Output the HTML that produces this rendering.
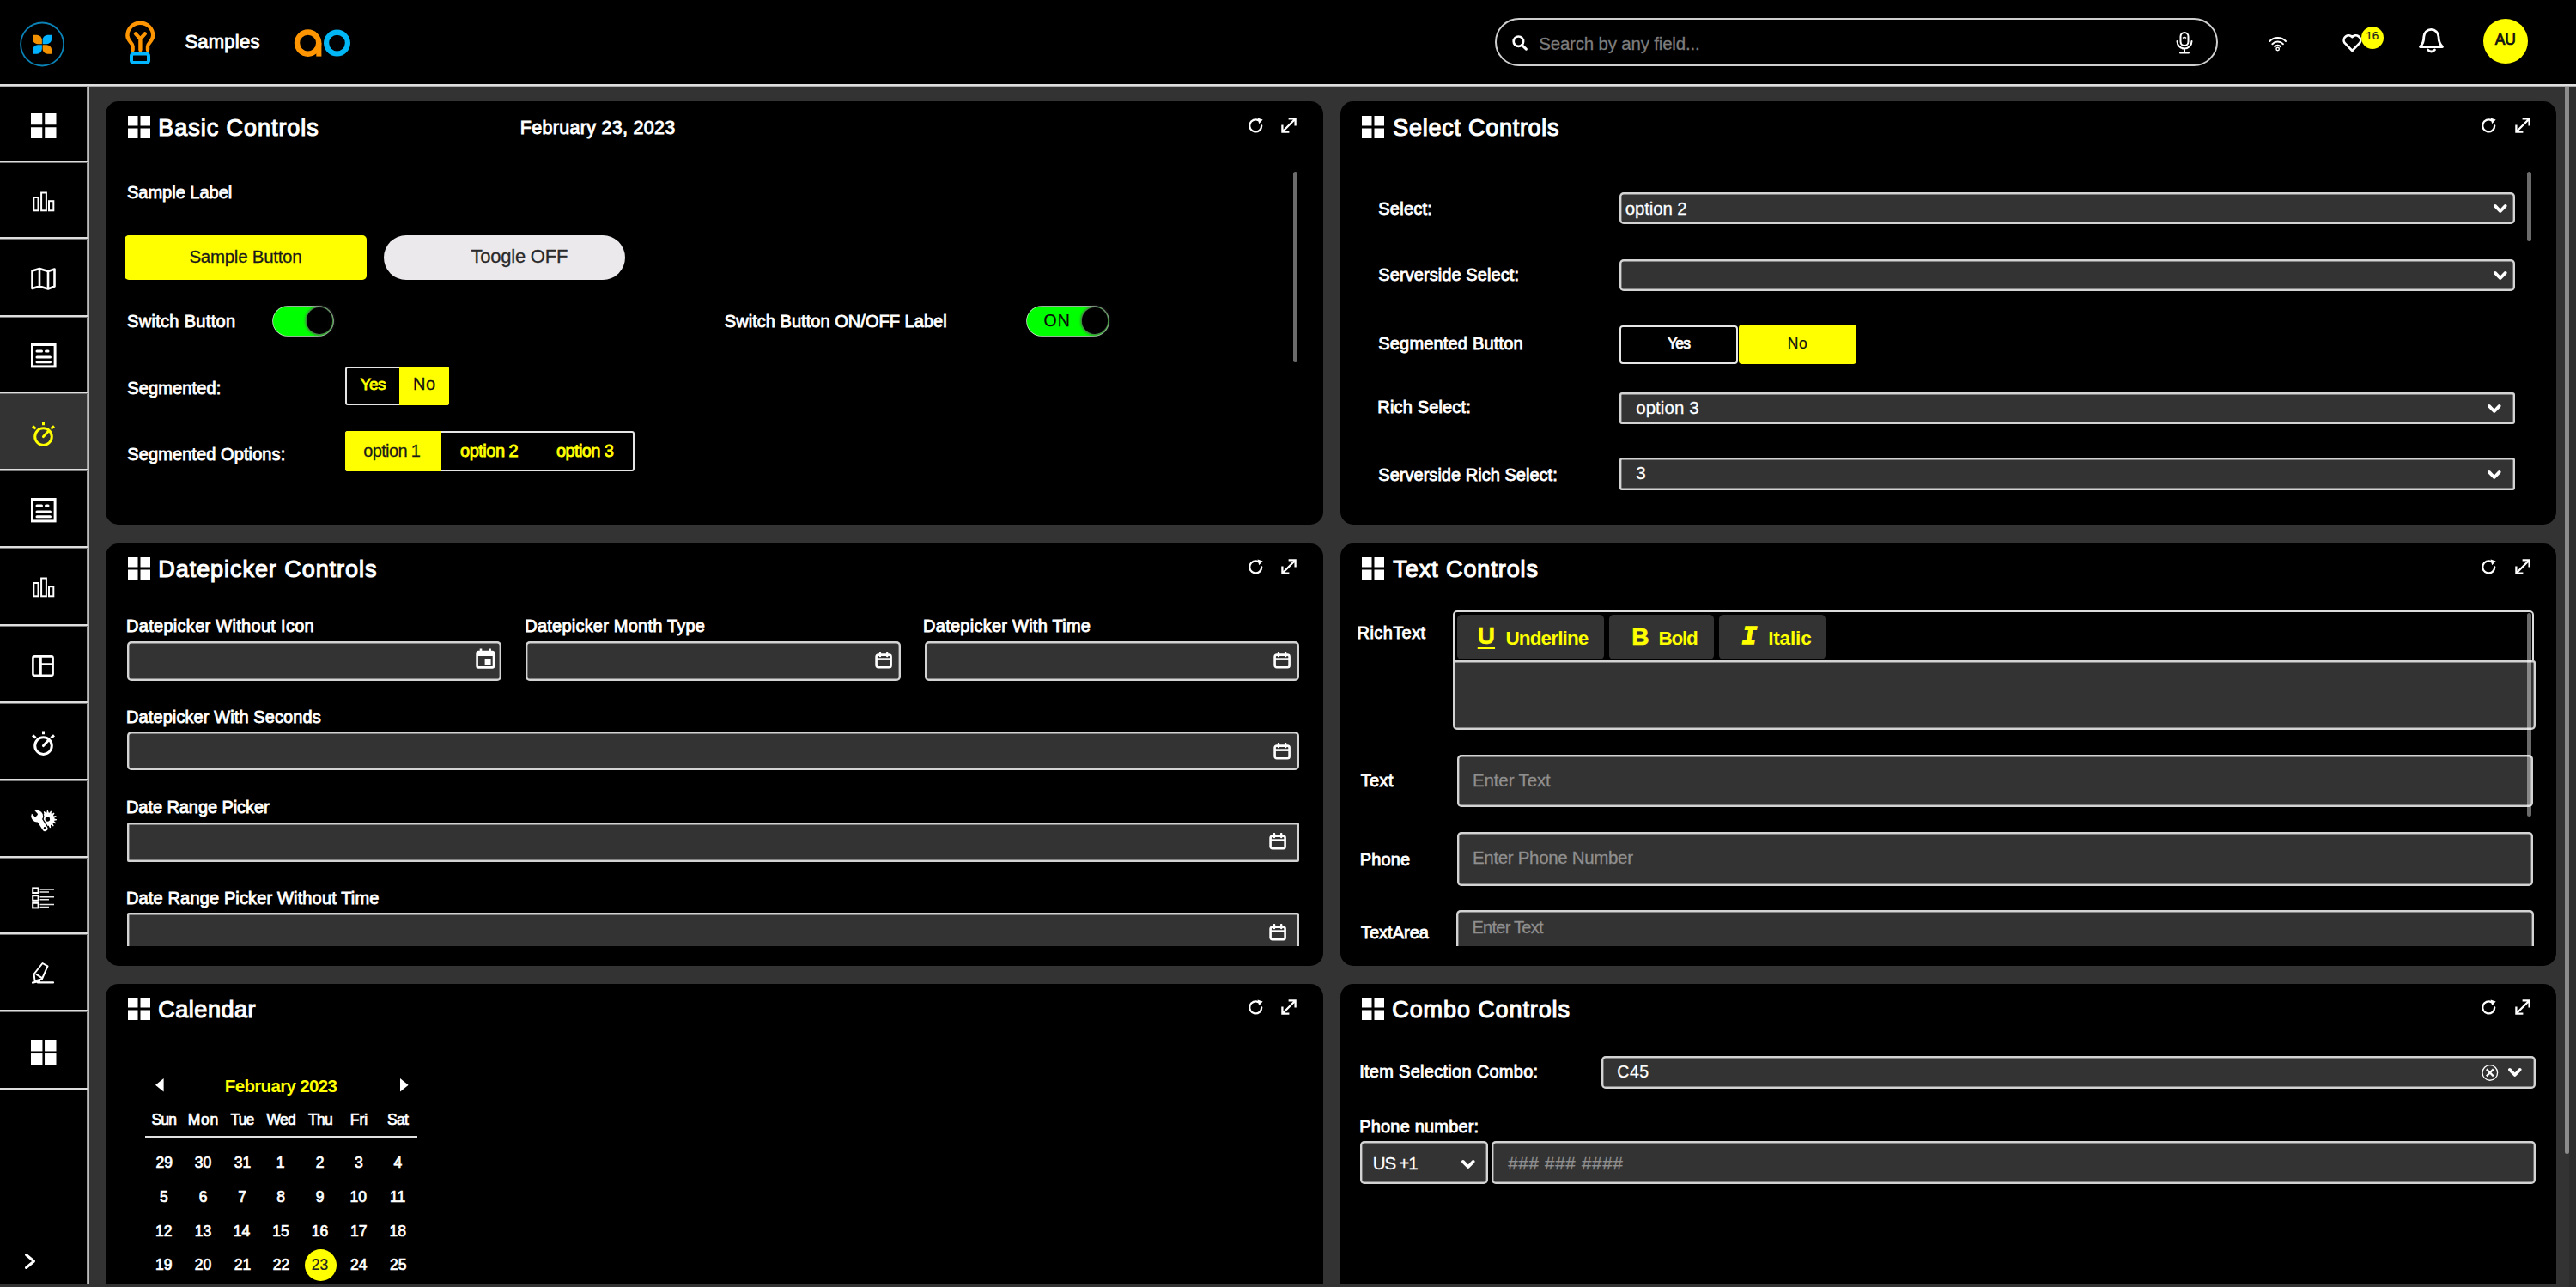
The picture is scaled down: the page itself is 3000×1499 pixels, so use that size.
<!DOCTYPE html>
<html lang="en"><head><meta charset="utf-8"><title>Samples</title><style>
html,body{margin:0;padding:0;background:#000;}
body{width:3000px;height:1499px;position:relative;overflow:hidden;font-family:"Liberation Sans", sans-serif;}
.a{position:absolute;display:block;}
.t{position:absolute;white-space:nowrap;line-height:1;display:block;}
</style></head>
<body>
<div class="a" style="left:0px;top:0px;width:3000px;height:1499px;background:#000;"></div>
<div class="a" style="left:103px;top:100px;width:2897px;height:1399px;background:#333333;"></div>
<div class="a" style="left:0px;top:0px;width:3000px;height:98px;background:#000;"></div>
<div class="a" style="left:0px;top:98px;width:3000px;height:3px;background:linear-gradient(#dedede 0 2px,#acacac 2px 3px);"></div>
<div class="a" style="left:0px;top:101px;width:101px;height:1398px;background:#000;"></div>
<div class="a" style="left:101px;top:100px;width:3px;height:1399px;background:linear-gradient(90deg,#9c9c9c 0 1px,#dedede 1px 2px,#bdbdbd 2px 3px);"></div>
<div class="a" style="left:0px;top:459px;width:101px;height:88px;background:#333333;"></div>
<div class="a" style="left:0px;top:187px;width:102px;height:3px;background:linear-gradient(#dedede 0 2px,#757575 2px 3px);"></div>
<div class="a" style="left:0px;top:276px;width:102px;height:3px;background:linear-gradient(#dedede 0 2px,#757575 2px 3px);"></div>
<div class="a" style="left:0px;top:367px;width:102px;height:3px;background:linear-gradient(#dedede 0 2px,#757575 2px 3px);"></div>
<div class="a" style="left:0px;top:456px;width:102px;height:3px;background:linear-gradient(#dedede 0 2px,#757575 2px 3px);"></div>
<div class="a" style="left:0px;top:546px;width:102px;height:3px;background:linear-gradient(#dedede 0 2px,#757575 2px 3px);"></div>
<div class="a" style="left:0px;top:636px;width:102px;height:3px;background:linear-gradient(#dedede 0 2px,#757575 2px 3px);"></div>
<div class="a" style="left:0px;top:727px;width:102px;height:3px;background:linear-gradient(#dedede 0 2px,#757575 2px 3px);"></div>
<div class="a" style="left:0px;top:817px;width:102px;height:3px;background:linear-gradient(#dedede 0 2px,#757575 2px 3px);"></div>
<div class="a" style="left:0px;top:907px;width:102px;height:3px;background:linear-gradient(#dedede 0 2px,#757575 2px 3px);"></div>
<div class="a" style="left:0px;top:997px;width:102px;height:3px;background:linear-gradient(#dedede 0 2px,#757575 2px 3px);"></div>
<div class="a" style="left:0px;top:1086px;width:102px;height:3px;background:linear-gradient(#dedede 0 2px,#757575 2px 3px);"></div>
<div class="a" style="left:0px;top:1176px;width:102px;height:3px;background:linear-gradient(#dedede 0 2px,#757575 2px 3px);"></div>
<div class="a" style="left:0px;top:1267px;width:102px;height:3px;background:linear-gradient(#dedede 0 2px,#757575 2px 3px);"></div>
<svg class="a" style="left:20px;top:22px;" width="60" height="60" viewBox="0 0 60 60"><circle cx="29.1" cy="29.5" r="25" fill="none" stroke="#0b82b6" stroke-width="1.8"/><path d="M18 18.7 H22.90 A6.00 6.00 0 0 1 28.9 24.70 V29.2 H24.00 A6.00 6.00 0 0 1 18 23.20 Z" fill="#f39200"/><path d="M40.1 18.7 H35.38 A5.78 5.78 0 0 0 29.6 24.48 V29.2 H34.33 A5.78 5.78 0 0 0 40.1 23.42 Z" fill="#00b2ff"/><path d="M18 40.8 H22.90 A6.00 6.00 0 0 0 28.9 34.80 V30.3 H24.00 A6.00 6.00 0 0 0 18 36.30 Z" fill="#00b2ff"/><path d="M40.1 40.8 H35.38 A5.78 5.78 0 0 1 29.6 35.02 V30.3 H34.33 A5.78 5.78 0 0 1 40.1 36.08 Z" fill="#f39200"/></svg>
<svg class="a" style="left:140px;top:20px;" width="50" height="60" viewBox="0 0 50 60">
<path d="M14.6 38 V34 C14.6 30 8.4 27.5 8.4 21.6 A14.9 14.9 0 0 1 38.2 21.6 C38.2 27.5 32 30 32 34 V38" fill="none" stroke="#ff9500" stroke-width="4.4" stroke-linecap="round" stroke-linejoin="round"/>
<path d="M23.4 38 V25 M18 19.4 L23.4 25.4 L28.8 19.4" fill="none" stroke="#ff9500" stroke-width="4.4" stroke-linecap="round" stroke-linejoin="round"/>
<rect x="13" y="42.5" width="20" height="10.5" rx="2.5" fill="none" stroke="#00b7ff" stroke-width="4"/>
</svg>
<span class="t" id="t0" style="left:215.40px;top:38px;font-size:22px;color:#fff;letter-spacing:0.233px;-webkit-text-stroke:0.92px #fff;">Samples</span>
<svg class="a" style="left:340px;top:30px;" width="72" height="40" viewBox="0 0 72 40">
<circle cx="18.6" cy="20.1" r="12.6" fill="none" stroke="#ff9500" stroke-width="6.4"/>
<path d="M28.3 20 H34.4 V35.6 H28.3 Z" fill="#ff9500"/>
<circle cx="52.5" cy="20.1" r="12.4" fill="none" stroke="#00b7f5" stroke-width="6.2"/>
</svg>
<div class="a" style="left:1741px;top:21px;width:842px;height:56px;border:2px solid #cfcfcf;border-radius:28px;box-sizing:border-box;"></div>
<svg class="a" style="left:1760px;top:40px;" width="22" height="22" viewBox="0 0 22 22"><circle cx="8.4" cy="8.2" r="5.7" fill="none" stroke="#fff" stroke-width="2.7"/><path d="M12.6 12.6 L17.4 17.2" stroke="#fff" stroke-width="3" stroke-linecap="round"/></svg>
<span class="t" id="t1" style="left:1792.20px;top:41px;font-size:20.5px;color:#7d7d7d;letter-spacing:-0.190px;-webkit-text-stroke:0.27px #7d7d7d;">Search by any field...</span>
<svg class="a" style="left:2532px;top:36px;" width="24" height="28" viewBox="0 0 24 28">
<rect x="7.5" y="2" width="9" height="15" rx="4.5" fill="none" stroke="#fff" stroke-width="2"/>
<path d="M3.5 12 A8.5 8.5 0 0 0 20.5 12 M12 20.5 V25 M7 25.5 H17" fill="none" stroke="#fff" stroke-width="2" stroke-linecap="round"/>
<path d="M10 8.5 Q12 6.5 14 8.5" fill="none" stroke="#fff" stroke-width="1.4"/>
</svg>
<svg class="a" style="left:2641px;top:40px;" width="24" height="21" viewBox="0 0 24 21">
<path d="M2.3 8 A13 13 0 0 1 21 8" fill="none" stroke="#fff" stroke-width="2" stroke-linecap="round"/>
<path d="M5.4 11.2 A8.8 8.8 0 0 1 17.9 11.2" fill="none" stroke="#fff" stroke-width="2" stroke-linecap="round"/>
<path d="M8.3 14.2 A4.6 4.6 0 0 1 15 14.2" fill="none" stroke="#fff" stroke-width="2" stroke-linecap="round"/>
<circle cx="11.65" cy="17" r="1.7" fill="none" stroke="#fff" stroke-width="1.4"/>
</svg>
<svg class="a" style="left:2726px;top:37px;" width="28" height="26" viewBox="0 0 28 26"><path d="M13.4 22 L4.3 12.6 A5.6 5.6 0 0 1 13.4 6.2 A5.6 5.6 0 0 1 22.5 12.6 Z" fill="none" stroke="#fff" stroke-width="2.6" stroke-linejoin="round"/></svg>
<div class="a" style="left:2750px;top:30.5px;width:26px;height:26px;background:#ffff00;border-radius:13px;"></div>
<span class="t" id="t2" style="left:2755.30px;top:35px;font-size:13.5px;color:#222;-webkit-text-stroke:0.18px #222;">16</span>
<svg class="a" style="left:2815px;top:31px;" width="34" height="32" viewBox="0 0 34 32">
<path d="M3.5 23.5 H29.5 C26 20 25 16 25 12 A8.6 8.6 0 0 0 7.8 12 C7.8 16 7 20 3.5 23.5 Z" fill="none" stroke="#fff" stroke-width="2.8" stroke-linejoin="round"/>
<path d="M12.5 27 Q16.5 31 20.5 27" fill="none" stroke="#fff" stroke-width="2.6" stroke-linecap="round"/>
</svg>
<div class="a" style="left:2891.6px;top:22.2px;width:52px;height:52px;background:#ffff00;border-radius:26px;"></div>
<span class="t" id="t3" style="left:2905.70px;top:38px;font-size:17.5px;color:#111;-webkit-text-stroke:0.74px #111;">AU</span>
<svg class="a" style="left:36px;top:131.5px;" width="29.5" height="29.5" viewBox="0 0 29.5 29.5"><rect x="0" y="0" width="13.25" height="13.25" fill="#fff"/><rect x="16.25" y="0" width="13.25" height="13.25" fill="#fff"/><rect x="0" y="16.25" width="13.25" height="13.25" fill="#fff"/><rect x="16.25" y="16.25" width="13.25" height="13.25" fill="#fff"/></svg>
<svg class="a" style="left:36.5px;top:221.5px;" width="28" height="26" viewBox="0 0 28 26">
<rect x="2.3" y="8" width="5.2" height="15.3" fill="none" stroke="#fff" stroke-width="2"/>
<rect x="11.1" y="2.5" width="5.8" height="20.8" fill="none" stroke="#fff" stroke-width="2"/>
<rect x="20" y="12.2" width="5.3" height="11.1" fill="none" stroke="#fff" stroke-width="2"/></svg>
<svg class="a" style="left:34.5px;top:311px;" width="32" height="28" viewBox="0 0 32 28"><path d="M2.5 4.5 L11 2 L21 5 L28.5 2.5 V22.5 L21 25.5 L11 22.5 L2.5 25 Z M11 2.5 V22.5 M21 5 V25" fill="none" stroke="#fff" stroke-width="2.6" stroke-linejoin="round"/></svg>
<svg class="a" style="left:35.6px;top:399.6px;" width="30" height="29" viewBox="0 0 30 29"><rect x="1.5" y="1.5" width="26.6" height="25.4" fill="none" stroke="#fff" stroke-width="3"/>
<path d="M7 9 H12.5 M17.5 9 H20" stroke="#fff" stroke-width="3" stroke-linecap="round"/>
<path d="M7 16 H22.5 M7 21.8 H22.5" stroke="#fff" stroke-width="3" stroke-linecap="round"/></svg>
<svg class="a" style="left:36px;top:489.5px;" width="30" height="31" viewBox="0 0 30 31"><circle cx="14.5" cy="18.6" r="9.8" fill="none" stroke="#ffff00" stroke-width="3"/>
<path d="M14.5 1.4 V5.2 M2 6.4 L5.6 9.4 M27 6.4 L23.4 9.4" stroke="#ffff00" stroke-width="3" stroke-linecap="butt"/><path d="M14.5 18.6 L20.6 12" stroke="#ffff00" stroke-width="3" stroke-linecap="round"/></svg>
<svg class="a" style="left:35.6px;top:580px;" width="30" height="29" viewBox="0 0 30 29"><rect x="1.5" y="1.5" width="26.6" height="25.4" fill="none" stroke="#fff" stroke-width="3"/>
<path d="M7 9 H12.5 M17.5 9 H20" stroke="#fff" stroke-width="3" stroke-linecap="round"/>
<path d="M7 16 H22.5 M7 21.8 H22.5" stroke="#fff" stroke-width="3" stroke-linecap="round"/></svg>
<svg class="a" style="left:36.5px;top:671px;" width="28" height="26" viewBox="0 0 28 26">
<rect x="2.3" y="8" width="5.2" height="15.3" fill="none" stroke="#fff" stroke-width="2"/>
<rect x="11.1" y="2.5" width="5.8" height="20.8" fill="none" stroke="#fff" stroke-width="2"/>
<rect x="20" y="12.2" width="5.3" height="11.1" fill="none" stroke="#fff" stroke-width="2"/></svg>
<svg class="a" style="left:37.4px;top:762.8px;" width="27" height="26" viewBox="0 0 27 26"><rect x="1.4" y="1.4" width="23.2" height="22.4" rx="2" fill="none" stroke="#fff" stroke-width="2.6"/>
<path d="M10.4 1.4 V23.8 M10.4 10.6 H24.6" stroke="#fff" stroke-width="2.8"/></svg>
<svg class="a" style="left:36px;top:850px;" width="30" height="31" viewBox="0 0 30 31"><circle cx="14.5" cy="18.6" r="9.8" fill="none" stroke="#fff" stroke-width="3"/>
<path d="M14.5 1.4 V5.2 M2 6.4 L5.6 9.4 M27 6.4 L23.4 9.4" stroke="#fff" stroke-width="3" stroke-linecap="butt"/><path d="M14.5 18.6 L20.6 12" stroke="#fff" stroke-width="3" stroke-linecap="round"/></svg>
<svg class="a" style="left:35px;top:940.5px;" width="34" height="30" viewBox="0 0 34 30"><polygon points="31.1,13.2 31.0,14.3 28.3,14.8 28.1,15.5 30.2,17.3 29.7,18.3 27.0,17.7 26.5,18.3 27.7,20.8 26.9,21.5 24.7,19.8 24.0,20.1 24.1,22.9 23.0,23.2 21.7,20.8 20.9,20.8 19.8,23.3 18.8,23.2 18.6,20.4 17.8,20.1 15.8,22.0 14.9,21.5 15.8,18.8 15.3,18.3 12.6,19.2 12.1,18.3 14.0,16.3 13.7,15.5 10.9,15.3 10.8,14.3 13.3,13.2 13.3,12.4 10.9,11.1 11.2,10.0 14.0,10.1 14.3,9.4 12.6,7.2 13.3,6.4 15.8,7.6 16.4,7.1 15.8,4.4 16.8,3.9 18.6,6.0 19.3,5.8 19.8,3.1 20.9,3.0 21.7,5.6 22.5,5.8 24.1,3.5 25.0,3.9 24.7,6.6 25.4,7.1 27.7,5.6 28.5,6.4 27.0,8.7 27.5,9.4 30.2,9.1 30.6,10.0 28.3,11.6 28.5,12.4" fill="#fff"/><circle cx="20.4" cy="13" r="2.7" fill="#000"/><g stroke-linecap="round"><path d="M8.2 9.6 L17.4 24" stroke="#000" stroke-width="8.8"/><circle cx="8.2" cy="9.6" r="8.2" fill="#000"/><path d="M8.2 9.6 L17.4 24" stroke="#fff" stroke-width="6.2"/><circle cx="8.2" cy="9.6" r="6.9" fill="#fff"/></g><rect x="5.799999999999999" y="-2.4000000000000004" width="4.8" height="11.4" rx="1.6" fill="#000" transform="rotate(-44 8.2 9.6)"/><circle cx="17.099999999999998" cy="23.4" r="1.3" fill="#000"/></svg>
<svg class="a" style="left:37px;top:1032.5px;" width="28" height="27" viewBox="0 0 28 27"><rect x="1.2" y="1.4" width="6.4" height="5.6" fill="none" stroke="#fff" stroke-width="2"/><path d="M9.5 3.0 H26 M9.5 6.0 H20" stroke="#e8e8e8" stroke-width="1.5"/><rect x="1.2" y="10.2" width="6.4" height="5.6" fill="none" stroke="#fff" stroke-width="2"/><path d="M9.5 11.8 H26 M9.5 14.8 H20" stroke="#e8e8e8" stroke-width="1.5"/><rect x="1.2" y="18.8" width="6.4" height="5.6" fill="none" stroke="#fff" stroke-width="2"/><path d="M9.5 20.4 H26 M9.5 23.4 H20" stroke="#e8e8e8" stroke-width="1.5"/></svg>
<svg class="a" style="left:37px;top:1120px;" width="28" height="29" viewBox="0 0 28 29"><path d="M12.5 2 L18.5 5.4 L11.8 20.5 L3.5 22.4 L2.6 14.5 Z M5 14.6 L11.5 18.8" fill="none" stroke="#fff" stroke-width="2" stroke-linejoin="round"/>
<path d="M1 24.6 L9 22.8 M7 24.4 H25" stroke="#fff" stroke-width="2.2" stroke-linecap="round"/></svg>
<svg class="a" style="left:36px;top:1211px;" width="29.5" height="29.5" viewBox="0 0 29.5 29.5"><rect x="0" y="0" width="13.45" height="13.45" fill="#fff"/><rect x="16.05" y="0" width="13.45" height="13.45" fill="#fff"/><rect x="0" y="16.05" width="13.45" height="13.45" fill="#fff"/><rect x="16.05" y="16.05" width="13.45" height="13.45" fill="#fff"/></svg>
<svg class="a" style="left:27px;top:1458px;" width="18" height="22" viewBox="0 0 18 22"><path d="M3.5 3.5 L12.5 11 L3.5 18.5" fill="none" stroke="#fff" stroke-width="3" stroke-linecap="round" stroke-linejoin="round"/></svg>
<div class="a" style="left:123px;top:118.3px;width:1417.6px;height:493.2px;background:#000;border-radius:15px;"></div>
<svg class="a" style="left:148.6px;top:134.7px;" width="26" height="26" viewBox="0 0 26 26"><rect x="0" y="0" width="11.5" height="11.5" fill="#fff"/><rect x="14.5" y="0" width="11.5" height="11.5" fill="#fff"/><rect x="0" y="14.5" width="11.5" height="11.5" fill="#fff"/><rect x="14.5" y="14.5" width="11.5" height="11.5" fill="#fff"/></svg>
<span class="t" id="t4" style="left:184.30px;top:136px;font-size:27px;color:#fff;letter-spacing:0.954px;-webkit-text-stroke:1.13px #fff;">Basic Controls</span>
<svg class="a" style="left:1452.6px;top:136.5px;" width="20" height="19" viewBox="0 0 20 19"><path d="M16.2 9.4 A7 7 0 1 1 12.6 3.3" fill="none" stroke="#fff" stroke-width="2.3" stroke-linecap="round"/>
<path d="M11.6 0.4 L17.6 2.4 L13.2 7.2 Z" fill="#fff"/></svg>
<svg class="a" style="left:1491.3px;top:135.9px;" width="20" height="20" viewBox="0 0 20 20"><path d="M3 17 L17 3 M9.6 2.4 H17.6 V10.4 M2.4 9.6 V17.6 H10.4" fill="none" stroke="#fff" stroke-width="2.3" stroke-linejoin="miter"/></svg>
<div class="a" style="left:1560.6px;top:118.3px;width:1416.2000000000003px;height:493.2px;background:#000;border-radius:15px;"></div>
<svg class="a" style="left:1585.6px;top:134.7px;" width="26" height="26" viewBox="0 0 26 26"><rect x="0" y="0" width="11.5" height="11.5" fill="#fff"/><rect x="14.5" y="0" width="11.5" height="11.5" fill="#fff"/><rect x="0" y="14.5" width="11.5" height="11.5" fill="#fff"/><rect x="14.5" y="14.5" width="11.5" height="11.5" fill="#fff"/></svg>
<span class="t" id="t5" style="left:1622.30px;top:136px;font-size:27px;color:#fff;letter-spacing:0.729px;-webkit-text-stroke:1.13px #fff;">Select Controls</span>
<svg class="a" style="left:2888.8px;top:136.5px;" width="20" height="19" viewBox="0 0 20 19"><path d="M16.2 9.4 A7 7 0 1 1 12.6 3.3" fill="none" stroke="#fff" stroke-width="2.3" stroke-linecap="round"/>
<path d="M11.6 0.4 L17.6 2.4 L13.2 7.2 Z" fill="#fff"/></svg>
<svg class="a" style="left:2927.5px;top:135.9px;" width="20" height="20" viewBox="0 0 20 20"><path d="M3 17 L17 3 M9.6 2.4 H17.6 V10.4 M2.4 9.6 V17.6 H10.4" fill="none" stroke="#fff" stroke-width="2.3" stroke-linejoin="miter"/></svg>
<div class="a" style="left:123px;top:632.6px;width:1417.6px;height:492.6px;background:#000;border-radius:15px;"></div>
<svg class="a" style="left:148.6px;top:649.0px;" width="26" height="26" viewBox="0 0 26 26"><rect x="0" y="0" width="11.5" height="11.5" fill="#fff"/><rect x="14.5" y="0" width="11.5" height="11.5" fill="#fff"/><rect x="0" y="14.5" width="11.5" height="11.5" fill="#fff"/><rect x="14.5" y="14.5" width="11.5" height="11.5" fill="#fff"/></svg>
<span class="t" id="t6" style="left:184.30px;top:650px;font-size:27px;color:#fff;letter-spacing:0.944px;-webkit-text-stroke:1.13px #fff;">Datepicker Controls</span>
<svg class="a" style="left:1452.6px;top:650.8000000000001px;" width="20" height="19" viewBox="0 0 20 19"><path d="M16.2 9.4 A7 7 0 1 1 12.6 3.3" fill="none" stroke="#fff" stroke-width="2.3" stroke-linecap="round"/>
<path d="M11.6 0.4 L17.6 2.4 L13.2 7.2 Z" fill="#fff"/></svg>
<svg class="a" style="left:1491.3px;top:650.2px;" width="20" height="20" viewBox="0 0 20 20"><path d="M3 17 L17 3 M9.6 2.4 H17.6 V10.4 M2.4 9.6 V17.6 H10.4" fill="none" stroke="#fff" stroke-width="2.3" stroke-linejoin="miter"/></svg>
<div class="a" style="left:1560.6px;top:632.6px;width:1416.2000000000003px;height:492.6px;background:#000;border-radius:15px;"></div>
<svg class="a" style="left:1585.6px;top:649.0px;" width="26" height="26" viewBox="0 0 26 26"><rect x="0" y="0" width="11.5" height="11.5" fill="#fff"/><rect x="14.5" y="0" width="11.5" height="11.5" fill="#fff"/><rect x="0" y="14.5" width="11.5" height="11.5" fill="#fff"/><rect x="14.5" y="14.5" width="11.5" height="11.5" fill="#fff"/></svg>
<span class="t" id="t7" style="left:1622.30px;top:650px;font-size:27px;color:#fff;letter-spacing:0.933px;-webkit-text-stroke:1.13px #fff;">Text Controls</span>
<svg class="a" style="left:2888.8px;top:650.8000000000001px;" width="20" height="19" viewBox="0 0 20 19"><path d="M16.2 9.4 A7 7 0 1 1 12.6 3.3" fill="none" stroke="#fff" stroke-width="2.3" stroke-linecap="round"/>
<path d="M11.6 0.4 L17.6 2.4 L13.2 7.2 Z" fill="#fff"/></svg>
<svg class="a" style="left:2927.5px;top:650.2px;" width="20" height="20" viewBox="0 0 20 20"><path d="M3 17 L17 3 M9.6 2.4 H17.6 V10.4 M2.4 9.6 V17.6 H10.4" fill="none" stroke="#fff" stroke-width="2.3" stroke-linejoin="miter"/></svg>
<div class="a" style="left:123px;top:1145.5px;width:1417.6px;height:400px;background:#000;border-radius:15px;"></div>
<svg class="a" style="left:148.6px;top:1161.9px;" width="26" height="26" viewBox="0 0 26 26"><rect x="0" y="0" width="11.5" height="11.5" fill="#fff"/><rect x="14.5" y="0" width="11.5" height="11.5" fill="#fff"/><rect x="0" y="14.5" width="11.5" height="11.5" fill="#fff"/><rect x="14.5" y="14.5" width="11.5" height="11.5" fill="#fff"/></svg>
<span class="t" id="t8" style="left:184.30px;top:1163px;font-size:27px;color:#fff;letter-spacing:0.514px;-webkit-text-stroke:1.13px #fff;">Calendar</span>
<svg class="a" style="left:1452.6px;top:1163.7px;" width="20" height="19" viewBox="0 0 20 19"><path d="M16.2 9.4 A7 7 0 1 1 12.6 3.3" fill="none" stroke="#fff" stroke-width="2.3" stroke-linecap="round"/>
<path d="M11.6 0.4 L17.6 2.4 L13.2 7.2 Z" fill="#fff"/></svg>
<svg class="a" style="left:1491.3px;top:1163.1px;" width="20" height="20" viewBox="0 0 20 20"><path d="M3 17 L17 3 M9.6 2.4 H17.6 V10.4 M2.4 9.6 V17.6 H10.4" fill="none" stroke="#fff" stroke-width="2.3" stroke-linejoin="miter"/></svg>
<div class="a" style="left:1560.6px;top:1145.5px;width:1416.2000000000003px;height:400px;background:#000;border-radius:15px;"></div>
<svg class="a" style="left:1585.6px;top:1161.9px;" width="26" height="26" viewBox="0 0 26 26"><rect x="0" y="0" width="11.5" height="11.5" fill="#fff"/><rect x="14.5" y="0" width="11.5" height="11.5" fill="#fff"/><rect x="0" y="14.5" width="11.5" height="11.5" fill="#fff"/><rect x="14.5" y="14.5" width="11.5" height="11.5" fill="#fff"/></svg>
<span class="t" id="t9" style="left:1621.30px;top:1163px;font-size:27px;color:#fff;letter-spacing:0.892px;-webkit-text-stroke:1.13px #fff;">Combo Controls</span>
<svg class="a" style="left:2888.8px;top:1163.7px;" width="20" height="19" viewBox="0 0 20 19"><path d="M16.2 9.4 A7 7 0 1 1 12.6 3.3" fill="none" stroke="#fff" stroke-width="2.3" stroke-linecap="round"/>
<path d="M11.6 0.4 L17.6 2.4 L13.2 7.2 Z" fill="#fff"/></svg>
<svg class="a" style="left:2927.5px;top:1163.1px;" width="20" height="20" viewBox="0 0 20 20"><path d="M3 17 L17 3 M9.6 2.4 H17.6 V10.4 M2.4 9.6 V17.6 H10.4" fill="none" stroke="#fff" stroke-width="2.3" stroke-linejoin="miter"/></svg>
<span class="t" id="t10" style="left:605.80px;top:139px;font-size:21.5px;color:#fff;letter-spacing:0.300px;-webkit-text-stroke:0.90px #fff;">February 23, 2023</span>
<span class="t" id="t11" style="left:148.00px;top:214px;font-size:20px;color:#fff;-webkit-text-stroke:0.84px #fff;">Sample Label</span>
<div class="a" style="left:145.3px;top:274px;width:281.3px;height:52.4px;background:#ffff00;border-radius:5px;"></div>
<span class="t" id="t12" style="left:220.40px;top:289px;font-size:20.5px;color:#1a1a1a;letter-spacing:-0.267px;-webkit-text-stroke:0.27px #1a1a1a;">Sample Button</span>
<div class="a" style="left:446.8px;top:274px;width:281.6px;height:52.4px;background:#ebe9ec;border-radius:26.2px;"></div>
<span class="t" id="t13" style="left:548.60px;top:288px;font-size:22px;color:#2a2a2a;letter-spacing:-0.244px;-webkit-text-stroke:0.29px #2a2a2a;">Toogle OFF</span>
<span class="t" id="t14" style="left:148.00px;top:364px;font-size:20px;color:#fff;letter-spacing:0.317px;-webkit-text-stroke:0.84px #fff;">Switch Button</span>
<div class="a" style="left:317.5px;top:356.8px;width:70px;height:34px;background:#00ff00;border-radius:17px;box-shadow:0 0 0 0.8px #c8f0c8;"></div>
<div class="a" style="left:356.5px;top:358.3px;width:30px;height:31px;background:#000;border-radius:16px;box-shadow:0 0 3px 1.2px #5a5a5a;"></div>
<span class="t" id="t15" style="left:843.80px;top:364px;font-size:20px;color:#fff;letter-spacing:0.040px;-webkit-text-stroke:0.84px #fff;">Switch Button ON/OFF Label</span>
<div class="a" style="left:1195.5px;top:356.8px;width:95px;height:34px;background:#00ff00;border-radius:17px;box-shadow:0 0 0 0.8px #c8f0c8;"></div>
<div class="a" style="left:1259.5px;top:358.3px;width:30px;height:31px;background:#000;border-radius:16px;box-shadow:0 0 3px 1.2px #5a5a5a;"></div>
<span class="t" id="t16" style="left:1215.40px;top:364px;font-size:19.5px;color:#0a0a0a;letter-spacing:1.200px;-webkit-text-stroke:0.25px #0a0a0a;">ON</span>
<span class="t" id="t17" style="left:148.30px;top:442px;font-size:20px;color:#fff;letter-spacing:0.133px;-webkit-text-stroke:0.84px #fff;">Segmented:</span>
<div class="a" style="left:402px;top:426.6px;width:121.3px;height:45.4px;background:#000;border:2px solid #e6e6e6;border-radius:3px;box-sizing:border-box;"></div>
<div class="a" style="left:465.4px;top:426.6px;width:58px;height:45.4px;background:#ffff00;border-radius:0 3px 3px 0;"></div>
<span class="t" id="t18" style="left:419.60px;top:438px;font-size:19px;color:#ffff00;letter-spacing:-0.600px;-webkit-text-stroke:0.80px #ffff00;">Yes</span>
<span class="t" id="t19" style="left:480.90px;top:437px;font-size:20px;color:#111;letter-spacing:0.600px;-webkit-text-stroke:0.26px #111;">No</span>
<span class="t" id="t20" style="left:148.30px;top:519px;font-size:20px;color:#fff;letter-spacing:0.094px;-webkit-text-stroke:0.84px #fff;">Segmented Options:</span>
<div class="a" style="left:402px;top:501.9px;width:337px;height:46.7px;background:#000;border:2px solid #e6e6e6;border-radius:3px;box-sizing:border-box;"></div>
<div class="a" style="left:402px;top:501.9px;width:112px;height:46.7px;background:#ffff00;border-radius:3px 0 0 3px;"></div>
<span class="t" id="t21" style="left:423.20px;top:515px;font-size:20px;color:#1a1a1a;letter-spacing:-0.629px;-webkit-text-stroke:0.26px #1a1a1a;">option 1</span>
<span class="t" id="t22" style="left:536.10px;top:515px;font-size:20px;color:#ffff00;letter-spacing:-0.514px;-webkit-text-stroke:0.84px #ffff00;">option 2</span>
<span class="t" id="t23" style="left:648.00px;top:515px;font-size:20px;color:#ffff00;letter-spacing:-0.629px;-webkit-text-stroke:0.84px #ffff00;">option 3</span>
<div class="a" style="left:1506.1px;top:200px;width:5px;height:221.5px;background:rgba(255,255,255,0.42);border-radius:2.5px;"></div>
<span class="t" id="t24" style="left:1605.30px;top:233px;font-size:20px;color:#fff;letter-spacing:0.233px;-webkit-text-stroke:0.84px #fff;">Select:</span>
<div class="a" style="left:1886px;top:223.5px;width:1042.5px;height:37.5px;background:#333333;border-radius:5px;box-shadow:inset 0 0 0 2.4px #d3d3d3;"></div>
<span class="t" id="t25" style="left:1892.80px;top:233px;font-size:20.5px;color:#fff;letter-spacing:-0.143px;-webkit-text-stroke:0.27px #fff;">option 2</span>
<svg class="a" style="left:2902.4px;top:235.8px;" width="19.6" height="14.3" viewBox="0 0 19.6 14.3"><path d="M3.85 3.85 L9.80 9.99 L15.75 3.85" fill="none" stroke="#fff" stroke-width="3.7" stroke-linecap="round" stroke-linejoin="round"/></svg>
<span class="t" id="t26" style="left:1605.30px;top:310px;font-size:20px;color:#fff;letter-spacing:0.082px;-webkit-text-stroke:0.84px #fff;">Serverside Select:</span>
<div class="a" style="left:1886px;top:301.8px;width:1042.5px;height:37.3px;background:#333333;border-radius:5px;box-shadow:inset 0 0 0 2.4px #d3d3d3;"></div>
<svg class="a" style="left:2902.4px;top:313.6px;" width="19.6" height="14.3" viewBox="0 0 19.6 14.3"><path d="M3.85 3.85 L9.80 9.99 L15.75 3.85" fill="none" stroke="#fff" stroke-width="3.7" stroke-linecap="round" stroke-linejoin="round"/></svg>
<span class="t" id="t27" style="left:1605.30px;top:390px;font-size:20px;color:#fff;letter-spacing:0.173px;-webkit-text-stroke:0.84px #fff;">Segmented Button</span>
<div class="a" style="left:1886px;top:378.6px;width:138.4px;height:45px;background:#000;border:2px solid #e6e6e6;border-radius:4px;box-sizing:border-box;"></div>
<span class="t" id="t28" style="left:1942.10px;top:392px;font-size:17.5px;color:#fff;letter-spacing:-0.800px;-webkit-text-stroke:0.74px #fff;">Yes</span>
<div class="a" style="left:2025.3px;top:378.2px;width:137.2px;height:45.4px;background:#ffff00;border-radius:4px;"></div>
<span class="t" id="t29" style="left:2081.80px;top:392px;font-size:17.5px;color:#111;letter-spacing:0.600px;-webkit-text-stroke:0.23px #111;">No</span>
<span class="t" id="t30" style="left:1604.30px;top:464px;font-size:20px;color:#fff;letter-spacing:0.164px;-webkit-text-stroke:0.84px #fff;">Rich Select:</span>
<div class="a" style="left:1886px;top:456.6px;width:1042.5px;height:37.5px;background:#333333;border-radius:3px;box-shadow:inset 0 0 0 2.4px #d3d3d3;"></div>
<span class="t" id="t31" style="left:1905.20px;top:465px;font-size:20.5px;color:#fff;letter-spacing:0.057px;-webkit-text-stroke:0.27px #fff;">option 3</span>
<svg class="a" style="left:2895.4px;top:468.8px;" width="19.6" height="14.3" viewBox="0 0 19.6 14.3"><path d="M3.85 3.85 L9.80 9.99 L15.75 3.85" fill="none" stroke="#fff" stroke-width="3.7" stroke-linecap="round" stroke-linejoin="round"/></svg>
<span class="t" id="t32" style="left:1605.30px;top:543px;font-size:20px;color:#fff;letter-spacing:0.027px;-webkit-text-stroke:0.84px #fff;">Serverside Rich Select:</span>
<div class="a" style="left:1886px;top:533.2px;width:1042.5px;height:37.5px;background:#333333;border-radius:3px;box-shadow:inset 0 0 0 2.4px #d3d3d3;"></div>
<span class="t" id="t33" style="left:1905.20px;top:541px;font-size:20.5px;color:#fff;-webkit-text-stroke:0.27px #fff;">3</span>
<svg class="a" style="left:2895.4px;top:545.6px;" width="19.6" height="14.3" viewBox="0 0 19.6 14.3"><path d="M3.85 3.85 L9.80 9.99 L15.75 3.85" fill="none" stroke="#fff" stroke-width="3.7" stroke-linecap="round" stroke-linejoin="round"/></svg>
<div class="a" style="left:2943.4px;top:200px;width:5px;height:80.5px;background:rgba(255,255,255,0.42);border-radius:2.5px;"></div>
<span class="t" id="t34" style="left:147.00px;top:719px;font-size:20px;color:#fff;letter-spacing:0.291px;-webkit-text-stroke:0.84px #fff;">Datepicker Without Icon</span>
<div class="a" style="left:148px;top:747px;width:436px;height:45.6px;background:#333333;border-radius:5px;box-shadow:inset 0 0 0 2.4px #d3d3d3;"></div>
<svg class="a" style="left:554px;top:754.5px;" width="23" height="25" viewBox="0 0 23 25"><rect x="1.6" y="4" width="19.4" height="18.4" rx="1.6" fill="none" stroke="#fff" stroke-width="2.6"/>
<rect x="1.6" y="4" width="19.4" height="5" fill="#fff"/><path d="M6 0.6 V5 M16.6 0.6 V5" stroke="#fff" stroke-width="2.6"/>
<rect x="10.6" y="12" width="7" height="7" fill="#fff"/></svg>
<span class="t" id="t35" style="left:611.30px;top:719px;font-size:20px;color:#fff;letter-spacing:0.220px;-webkit-text-stroke:0.84px #fff;">Datepicker Month Type</span>
<div class="a" style="left:612.3px;top:747px;width:436.3px;height:45.6px;background:#333333;border-radius:5px;box-shadow:inset 0 0 0 2.4px #d3d3d3;"></div>
<svg class="a" style="left:1018.6px;top:758.8px;" width="21" height="21" viewBox="0 0 21 21"><rect x="1.6" y="3.6" width="17" height="14.6" rx="2.2" fill="none" stroke="#fff" stroke-width="2.6"/>
<path d="M1.6 8.6 H18.6" stroke="#fff" stroke-width="2.6"/><path d="M6 1 V5 M14.2 1 V5" stroke="#fff" stroke-width="2.4" stroke-linecap="round"/></svg>
<span class="t" id="t36" style="left:1075.10px;top:719px;font-size:20px;color:#fff;letter-spacing:0.253px;-webkit-text-stroke:0.84px #fff;">Datepicker With Time</span>
<div class="a" style="left:1076.5px;top:747px;width:436.3px;height:45.6px;background:#333333;border-radius:5px;box-shadow:inset 0 0 0 2.4px #d3d3d3;"></div>
<svg class="a" style="left:1483px;top:758.8px;" width="21" height="21" viewBox="0 0 21 21"><rect x="1.6" y="3.6" width="17" height="14.6" rx="2.2" fill="none" stroke="#fff" stroke-width="2.6"/>
<path d="M1.6 8.6 H18.6" stroke="#fff" stroke-width="2.6"/><path d="M6 1 V5 M14.2 1 V5" stroke="#fff" stroke-width="2.4" stroke-linecap="round"/></svg>
<span class="t" id="t37" style="left:147.00px;top:825px;font-size:20px;color:#fff;letter-spacing:0.100px;-webkit-text-stroke:0.84px #fff;">Datepicker With Seconds</span>
<div class="a" style="left:148px;top:851.5px;width:1364.8px;height:45.6px;background:#333333;border-radius:5px;box-shadow:inset 0 0 0 2.4px #d3d3d3;"></div>
<svg class="a" style="left:1483px;top:865px;" width="21" height="21" viewBox="0 0 21 21"><rect x="1.6" y="3.6" width="17" height="14.6" rx="2.2" fill="none" stroke="#fff" stroke-width="2.6"/>
<path d="M1.6 8.6 H18.6" stroke="#fff" stroke-width="2.6"/><path d="M6 1 V5 M14.2 1 V5" stroke="#fff" stroke-width="2.4" stroke-linecap="round"/></svg>
<span class="t" id="t38" style="left:147.00px;top:930px;font-size:20px;color:#fff;letter-spacing:-0.075px;-webkit-text-stroke:0.84px #fff;">Date Range Picker</span>
<div class="a" style="left:148px;top:958px;width:1364.8px;height:45.6px;background:#333333;border-radius:2px;box-shadow:inset 0 0 0 2.4px #d3d3d3;"></div>
<svg class="a" style="left:1478.4px;top:970.4px;" width="21" height="21" viewBox="0 0 21 21"><rect x="1.6" y="3.6" width="17" height="14.6" rx="2.2" fill="none" stroke="#fff" stroke-width="2.6"/>
<path d="M1.6 8.6 H18.6" stroke="#fff" stroke-width="2.6"/><path d="M6 1 V5 M14.2 1 V5" stroke="#fff" stroke-width="2.4" stroke-linecap="round"/></svg>
<span class="t" id="t39" style="left:147.00px;top:1036px;font-size:20px;color:#fff;letter-spacing:0.145px;-webkit-text-stroke:0.84px #fff;">Date Range Picker Without Time</span>
<div class="a" style="left:148px;top:1063px;width:1364.8px;height:38.8px;overflow:hidden;"><div class="a" style="left:0;top:0;width:1364.8px;height:45.6px;background:#333333;border-radius:2px;box-shadow:inset 0 0 0 2.4px #d3d3d3;"></div></div>
<svg class="a" style="left:1478.4px;top:1076.4px;" width="21" height="21" viewBox="0 0 21 21"><rect x="1.6" y="3.6" width="17" height="14.6" rx="2.2" fill="none" stroke="#fff" stroke-width="2.6"/>
<path d="M1.6 8.6 H18.6" stroke="#fff" stroke-width="2.6"/><path d="M6 1 V5 M14.2 1 V5" stroke="#fff" stroke-width="2.4" stroke-linecap="round"/></svg>
<span class="t" id="t40" style="left:1580.60px;top:727px;font-size:20px;color:#fff;letter-spacing:0.400px;-webkit-text-stroke:0.84px #fff;">RichText</span>
<div class="a" style="left:1692.2px;top:711.2px;width:1259px;height:60px;background:#000;border:2px solid #dcdcdc;border-radius:5px 5px 0 0;box-sizing:border-box;"></div>
<div class="a" style="left:1692.2px;top:768.7px;width:1261px;height:81.8px;background:#333333;border-radius:0 3px 5px 5px;box-shadow:inset 0 0 0 2.4px #d3d3d3;"></div>
<div class="a" style="left:1697.4px;top:716.3px;width:171px;height:52px;background:#333333;border-radius:5px;"></div>
<span class="t" id="t41" style="left:1720.80px;top:727px;font-size:28px;color:#ffff00;font-weight:700;-webkit-text-stroke:0.5px #ffff00;text-decoration:underline;text-underline-offset:3px;text-decoration-thickness:2.5px;">U</span>
<span class="t" id="t42" style="left:1753.50px;top:733px;font-size:22.5px;color:#ffff00;font-weight:700;letter-spacing:-0.875px;">Underline</span>
<div class="a" style="left:1874.1px;top:716.3px;width:122.4px;height:52px;background:#333333;border-radius:5px;"></div>
<span class="t" id="t43" style="left:1900.30px;top:728px;font-size:28px;color:#ffff00;font-weight:700;-webkit-text-stroke:0.7px #ffff00;">B</span>
<span class="t" id="t44" style="left:1931.40px;top:733px;font-size:22.5px;color:#ffff00;font-weight:700;letter-spacing:-1.200px;">Bold</span>
<div class="a" style="left:2001.9px;top:716.3px;width:124.4px;height:52px;background:#333333;border-radius:5px;"></div>
<span class="t" id="t45" style="left:2028.60px;top:728px;font-size:29px;color:#ffff00;font-weight:700;font-style:italic;font-family:'Liberation Mono',monospace;-webkit-text-stroke:1.3px #ffff00;">I</span>
<span class="t" id="t46" style="left:2059.20px;top:733px;font-size:22.5px;color:#ffff00;font-weight:700;letter-spacing:-0.160px;">Italic</span>
<span class="t" id="t47" style="left:1584.70px;top:899px;font-size:20px;color:#fff;letter-spacing:0.400px;-webkit-text-stroke:0.84px #fff;">Text</span>
<div class="a" style="left:1696.8px;top:878.5px;width:1253.1px;height:61px;background:#333333;border-radius:5px;box-shadow:inset 0 0 0 2.4px #d3d3d3;"></div>
<span class="t" id="t48" style="left:1715.00px;top:899px;font-size:20.5px;color:#8f8f8f;letter-spacing:-0.133px;-webkit-text-stroke:0.27px #8f8f8f;">Enter Text</span>
<span class="t" id="t49" style="left:1583.70px;top:991px;font-size:20px;color:#fff;letter-spacing:0.150px;-webkit-text-stroke:0.84px #fff;">Phone</span>
<div class="a" style="left:1696.8px;top:969.3px;width:1253.1px;height:62.5px;background:#333333;border-radius:5px;box-shadow:inset 0 0 0 2.4px #d3d3d3;"></div>
<span class="t" id="t50" style="left:1715.00px;top:989px;font-size:20.5px;color:#8f8f8f;letter-spacing:-0.329px;-webkit-text-stroke:0.27px #8f8f8f;">Enter Phone Number</span>
<span class="t" id="t51" style="left:1585.00px;top:1076px;font-size:20px;color:#fff;-webkit-text-stroke:0.84px #fff;">TextArea</span>
<div class="a" style="left:1695.7px;top:1060px;width:1255.4px;height:41.8px;overflow:hidden;"><div class="a" style="left:0;top:0;width:1255.4px;height:62px;background:#333333;border-radius:5px;box-shadow:inset 0 0 0 2.4px #d3d3d3;"></div></div>
<span class="t" id="t52" style="left:1714.50px;top:1070px;font-size:20px;color:#8f8f8f;letter-spacing:-0.733px;-webkit-text-stroke:0.26px #8f8f8f;">Enter Text</span>
<div class="a" style="left:2943.4px;top:713.7px;width:5px;height:237px;background:rgba(255,255,255,0.42);border-radius:2.5px;"></div>
<svg class="a" style="left:179.5px;top:1255px;" width="12" height="18" viewBox="0 0 12 18"><path d="M10.6 1 V16.4 L1 8.7 Z" fill="#fff"/></svg>
<svg class="a" style="left:465px;top:1255px;" width="12" height="18" viewBox="0 0 12 18"><path d="M1 1 V16.4 L10.6 8.7 Z" fill="#fff"/></svg>
<span class="t" id="t53" style="left:261.80px;top:1255px;font-size:20.5px;color:#ffff00;font-weight:700;letter-spacing:-0.650px;">February 2023</span>
<span class="t" id="t54" style="left:176.60px;top:1296px;font-size:17.5px;color:#fff;letter-spacing:-0.900px;-webkit-text-stroke:0.74px #fff;">Sun</span>
<span class="t" id="t55" style="left:218.70px;top:1296px;font-size:17.5px;color:#fff;letter-spacing:0.700px;-webkit-text-stroke:0.74px #fff;">Mon</span>
<span class="t" id="t56" style="left:268.60px;top:1296px;font-size:17.5px;color:#fff;letter-spacing:-0.900px;-webkit-text-stroke:0.74px #fff;">Tue</span>
<span class="t" id="t57" style="left:310.60px;top:1296px;font-size:17.5px;color:#fff;letter-spacing:-0.800px;-webkit-text-stroke:0.74px #fff;">Wed</span>
<span class="t" id="t58" style="left:359.10px;top:1296px;font-size:17.5px;color:#fff;letter-spacing:-0.700px;-webkit-text-stroke:0.74px #fff;">Thu</span>
<span class="t" id="t59" style="left:407.80px;top:1296px;font-size:17.5px;color:#fff;-webkit-text-stroke:0.74px #fff;">Fri</span>
<span class="t" id="t60" style="left:451.10px;top:1296px;font-size:17.5px;color:#fff;letter-spacing:-0.800px;-webkit-text-stroke:0.74px #fff;">Sat</span>
<div class="a" style="left:168.5px;top:1323.4px;width:317.5px;height:2.4px;background:#e0e0e0;"></div>
<div class="a" style="left:354.79999999999995px;top:1455.3000000000002px;width:37.2px;height:37.2px;background:#ffff00;border-radius:18.6px;"></div>
<span class="t" id="t61" style="left:181.50px;top:1346px;font-size:17.5px;color:#fff;-webkit-text-stroke:0.74px #fff;">29</span>
<span class="t" id="t62" style="left:226.80px;top:1346px;font-size:17.5px;color:#fff;-webkit-text-stroke:0.74px #fff;">30</span>
<span class="t" id="t63" style="left:272.70px;top:1346px;font-size:17.5px;color:#fff;-webkit-text-stroke:0.74px #fff;">31</span>
<span class="t" id="t64" style="left:321.80px;top:1346px;font-size:17.5px;color:#fff;-webkit-text-stroke:0.74px #fff;">1</span>
<span class="t" id="t65" style="left:367.70px;top:1346px;font-size:17.5px;color:#fff;-webkit-text-stroke:0.74px #fff;">2</span>
<span class="t" id="t66" style="left:413.10px;top:1346px;font-size:17.5px;color:#fff;-webkit-text-stroke:0.74px #fff;">3</span>
<span class="t" id="t67" style="left:458.50px;top:1346px;font-size:17.5px;color:#fff;-webkit-text-stroke:0.74px #fff;">4</span>
<span class="t" id="t68" style="left:186.00px;top:1386px;font-size:17.5px;color:#fff;-webkit-text-stroke:0.74px #fff;">5</span>
<span class="t" id="t69" style="left:231.80px;top:1386px;font-size:17.5px;color:#fff;-webkit-text-stroke:0.74px #fff;">6</span>
<span class="t" id="t70" style="left:277.20px;top:1386px;font-size:17.5px;color:#fff;-webkit-text-stroke:0.74px #fff;">7</span>
<span class="t" id="t71" style="left:322.30px;top:1386px;font-size:17.5px;color:#fff;-webkit-text-stroke:0.74px #fff;">8</span>
<span class="t" id="t72" style="left:367.70px;top:1386px;font-size:17.5px;color:#fff;-webkit-text-stroke:0.74px #fff;">9</span>
<span class="t" id="t73" style="left:407.60px;top:1386px;font-size:17.5px;color:#fff;-webkit-text-stroke:0.74px #fff;">10</span>
<span class="t" id="t74" style="left:454.00px;top:1386px;font-size:17.5px;color:#fff;-webkit-text-stroke:0.74px #fff;">11</span>
<span class="t" id="t75" style="left:181.00px;top:1426px;font-size:17.5px;color:#fff;-webkit-text-stroke:0.74px #fff;">12</span>
<span class="t" id="t76" style="left:226.80px;top:1426px;font-size:17.5px;color:#fff;-webkit-text-stroke:0.74px #fff;">13</span>
<span class="t" id="t77" style="left:271.70px;top:1426px;font-size:17.5px;color:#fff;-webkit-text-stroke:0.74px #fff;">14</span>
<span class="t" id="t78" style="left:317.30px;top:1426px;font-size:17.5px;color:#fff;-webkit-text-stroke:0.74px #fff;">15</span>
<span class="t" id="t79" style="left:362.70px;top:1426px;font-size:17.5px;color:#fff;-webkit-text-stroke:0.74px #fff;">16</span>
<span class="t" id="t80" style="left:408.10px;top:1426px;font-size:17.5px;color:#fff;-webkit-text-stroke:0.74px #fff;">17</span>
<span class="t" id="t81" style="left:453.50px;top:1426px;font-size:17.5px;color:#fff;-webkit-text-stroke:0.74px #fff;">18</span>
<span class="t" id="t82" style="left:181.00px;top:1465px;font-size:17.5px;color:#fff;-webkit-text-stroke:0.74px #fff;">19</span>
<span class="t" id="t83" style="left:226.80px;top:1465px;font-size:17.5px;color:#fff;-webkit-text-stroke:0.74px #fff;">20</span>
<span class="t" id="t84" style="left:272.70px;top:1465px;font-size:17.5px;color:#fff;-webkit-text-stroke:0.74px #fff;">21</span>
<span class="t" id="t85" style="left:317.80px;top:1465px;font-size:17.5px;color:#fff;-webkit-text-stroke:0.74px #fff;">22</span>
<span class="t" id="t86" style="left:362.70px;top:1465px;font-size:17.5px;color:#222;-webkit-text-stroke:0.23px #222;">23</span>
<span class="t" id="t87" style="left:408.10px;top:1465px;font-size:17.5px;color:#fff;-webkit-text-stroke:0.74px #fff;">24</span>
<span class="t" id="t88" style="left:454.00px;top:1465px;font-size:17.5px;color:#fff;-webkit-text-stroke:0.74px #fff;">25</span>
<span class="t" id="t89" style="left:1583.20px;top:1238px;font-size:20px;color:#fff;letter-spacing:0.280px;-webkit-text-stroke:0.84px #fff;">Item Selection Combo:</span>
<div class="a" style="left:1865.4px;top:1230.4px;width:1087.6px;height:37.8px;background:#333333;border-radius:5px;box-shadow:inset 0 0 0 2.4px #d3d3d3;"></div>
<span class="t" id="t90" style="left:1883.30px;top:1239px;font-size:19.5px;color:#fff;letter-spacing:0.500px;-webkit-text-stroke:0.25px #fff;">C45</span>
<svg class="a" style="left:2889px;top:1238.5px;" width="22" height="22" viewBox="0 0 22 22"><circle cx="10.8" cy="10.4" r="8.8" fill="none" stroke="#fff" stroke-width="1.35"/><path d="M6.8 6.4 L14.8 14.4 M14.8 6.4 L6.8 14.4" stroke="#fff" stroke-width="2.2"/></svg>
<svg class="a" style="left:2919.2px;top:1242.2px;" width="19.6" height="14.3" viewBox="0 0 19.6 14.3"><path d="M3.85 3.85 L9.80 9.99 L15.75 3.85" fill="none" stroke="#fff" stroke-width="3.7" stroke-linecap="round" stroke-linejoin="round"/></svg>
<span class="t" id="t91" style="left:1583.20px;top:1302px;font-size:20px;color:#fff;letter-spacing:0.183px;-webkit-text-stroke:0.84px #fff;">Phone number:</span>
<div class="a" style="left:1584.2px;top:1329px;width:148.6px;height:49.6px;background:#333333;border-radius:5px;box-shadow:inset 0 0 0 2.4px #d3d3d3;"></div>
<span class="t" id="t92" style="left:1598.80px;top:1345px;font-size:20.5px;color:#fff;letter-spacing:-1.200px;-webkit-text-stroke:0.27px #fff;">US +1</span>
<svg class="a" style="left:1700.4px;top:1348.8px;" width="19.6" height="14.3" viewBox="0 0 19.6 14.3"><path d="M3.85 3.85 L9.80 9.99 L15.75 3.85" fill="none" stroke="#fff" stroke-width="3.7" stroke-linecap="round" stroke-linejoin="round"/></svg>
<div class="a" style="left:1737.4px;top:1329px;width:1215.6px;height:49.6px;background:#333333;border-radius:5px;box-shadow:inset 0 0 0 2.4px #d3d3d3;"></div>
<span class="t" id="t93" style="left:1756.20px;top:1345px;font-size:20.5px;color:#8f8f8f;letter-spacing:0.745px;-webkit-text-stroke:0.27px #8f8f8f;">### ### ####</span>
<div class="a" style="left:0px;top:1496.4px;width:3000px;height:3px;background:#333333;"></div>
<div class="a" style="left:2992.3px;top:101px;width:7.7px;height:1398px;background:#2d2d2d;"></div>
<div class="a" style="left:2987.3px;top:101px;width:5px;height:1242.6px;background:#8c8c8c;border-radius:0 0 2.5px 2.5px;"></div>
</body></html>
